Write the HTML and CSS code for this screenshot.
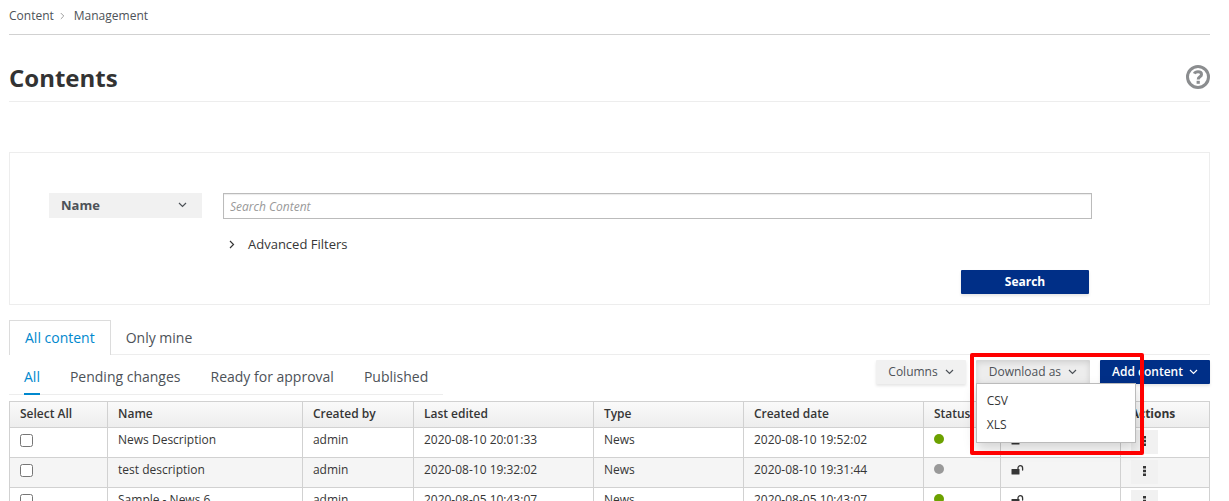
FILE: index.html
```html
<!DOCTYPE html>
<html lang="en">
<head>
<meta charset="utf-8">
<title>Contents</title>
<link rel="stylesheet" href="styles.css">
</head>
<body>
<svg class="defs" aria-hidden="true">
  <symbol id="chev-down" viewBox="0 0 9 6"><path d="M1 1l3.5 3.5L8 1" fill="none" stroke="currentColor" stroke-width="1.2"/></symbol>
  <symbol id="chev-right" viewBox="0 0 6 9"><path d="M1 1l3.5 3.5L1 8" fill="none" stroke="currentColor" stroke-width="1.2"/></symbol>
  <symbol id="unlock" viewBox="0 0 13 10"><rect x="0.500" y="4" width="8" height="5.500" rx=".5" fill="currentColor"/><path d="M7 4.500V3a2.200 2.200 0 0 1 4.600 0V5" fill="none" stroke="currentColor" stroke-width="1.300" stroke-linecap="round"/></symbol>
  <symbol id="kebab" viewBox="0 0 3 10"><path d="M0 0h3v2.500H0zM0 3.700h3v2.500H0zM0 7.400h3v2.500H0z" fill="currentColor"/></symbol>
</svg>
<nav class="breadcrumb" aria-label="Breadcrumb">
  <a href="#">Content</a>
  <svg class="crumb-sep"><use href="#chev-right"/></svg>
  <span>Management</span>
</nav>
<main>
  <header class="page-head">
    <h1>Contents</h1>
    <button class="help" aria-label="Help">
      <svg viewBox="0 0 24 24"><circle cx="12" cy="12" r="10.500" fill="none" stroke="currentColor" stroke-width="3"/><path d="M8.300 8.700C9 7.300 10.300 6.700 12 6.700c2.100 0 3.500 1 3.500 2.700 0 2.500-3.300 2.300-3.300 5" fill="none" stroke="currentColor" stroke-width="3"/><rect x="10.600" y="15.800" width="3.200" height="3" fill="currentColor"/></svg>
    </button>
  </header>

  <form class="search">
    <div class="select-wrap">
      <select class="field-select" aria-label="Search field"><option>Name</option></select>
      <svg class="chev"><use href="#chev-down"/></svg>
    </div>
    <input class="search-input" type="text" placeholder="Search Content" aria-label="Search content">
    <button class="advanced" type="button"><svg class="chev-r"><use href="#chev-right"/></svg>Advanced Filters</button>
    <button class="btn primary submit" type="button">Search</button>
  </form>

  <nav class="tabs" aria-label="Ownership">
    <a class="tab active" href="#">All content</a>
    <a class="tab" href="#">Only mine</a>
  </nav>

  <div class="toolbar">
    <nav class="subtabs" aria-label="Status filter">
      <a class="subtab active" href="#">All</a>
      <a class="subtab" href="#">Pending changes</a>
      <a class="subtab" href="#">Ready for approval</a>
      <a class="subtab" href="#">Published</a>
    </nav>
    <div class="actions">
      <button class="btn">Columns<svg class="chev"><use href="#chev-down"/></svg></button>
      <div class="dropdown">
        <button class="btn open" aria-expanded="true">Download as<svg class="chev"><use href="#chev-down"/></svg></button>
        <ul class="menu">
          <li><a href="#">CSV</a></li>
          <li><a href="#">XLS</a></li>
        </ul>
        <div class="highlight"></div>
      </div>
      <button class="btn primary">Add content<svg class="chev"><use href="#chev-down"/></svg></button>
    </div>
  </div>

  <table class="grid">
    <colgroup><col class="c-select"><col class="c-name"><col class="c-by"><col class="c-date"><col class="c-type"><col class="c-date"><col class="c-status"><col class="c-lock"><col class="c-actions"></colgroup>
    <thead>
      <tr><th>Select All</th><th>Name</th><th>Created by</th><th>Last edited</th><th>Type</th><th>Created date</th><th>Status</th><th aria-label="Lock"></th><th class="strong">Actions</th></tr>
    </thead>
    <tbody>
      <tr><td><input type="checkbox" aria-label="Select News Description"></td><td>News Description</td><td>admin</td><td>2020-08-10 20:01:33</td><td>News</td><td>2020-08-10 19:52:02</td><td><span class="dot green"></span></td><td><svg class="lock"><use href="#unlock"/></svg></td><td><button class="kebab" aria-label="Actions"><svg><use href="#kebab"/></svg></button></td></tr>
      <tr><td><input type="checkbox" aria-label="Select test description"></td><td>test description</td><td>admin</td><td>2020-08-10 19:32:02</td><td>News</td><td>2020-08-10 19:31:44</td><td><span class="dot"></span></td><td><svg class="lock"><use href="#unlock"/></svg></td><td><button class="kebab" aria-label="Actions"><svg><use href="#kebab"/></svg></button></td></tr>
      <tr><td><input type="checkbox" aria-label="Select Sample - News 6"></td><td>Sample - News 6</td><td>admin</td><td>2020-08-05 10:43:07</td><td>News</td><td>2020-08-05 10:43:07</td><td><span class="dot green"></span></td><td><svg class="lock"><use href="#unlock"/></svg></td><td><button class="kebab" aria-label="Actions"><svg><use href="#kebab"/></svg></button></td></tr>
    </tbody>
  </table>
</main>
</body>
</html>
```
FILE: styles.css
```css
* { box-sizing: border-box; }
html { overflow: hidden; }
body {
  margin: 0;
  padding: 0 19px 0 9px;
  background: #fff;
  color: #363636;
  font: 12px/16px "Open Sans", sans-serif;
}
a { color: inherit; text-decoration: none; }
button, input, select { font: inherit; color: inherit; margin: 0; }
button { border: 0; padding: 0; background: none; cursor: pointer; }
svg { display: block; }
.defs { position: absolute; width: 0; height: 0; }

.breadcrumb {
  display: flex;
  align-items: center;
  height: 35px;
  padding-bottom: 3px;
  border-bottom: 1px solid #d1d1d1;
  color: #4d5258;
}
.crumb-sep { width: 5px; height: 8px; margin: 0 9px 0 6px; color: #9c9c9c; }

.page-head {
  display: flex;
  justify-content: space-between;
  align-items: center;
  height: 67px;
  padding-top: 18px;
  border-bottom: 1px solid #ededed;
}
h1 { margin: 0; padding-top: 2px; font-size: 24px; line-height: 32px; font-weight: 700; color: #333; }
.help { color: #8b8d8f; }
.help svg { width: 24px; height: 24px; }

.search {
  display: grid;
  grid-template-columns: 153px 1fr;
  column-gap: 21px;
  margin-top: 50px;
  padding: 40px 117px 10px 39px;
  border: 1px solid #ededed;
}
.select-wrap { position: relative; height: 25px; }
.field-select {
  appearance: none;
  width: 100%;
  height: 25px;
  padding: 0 12px 2px;
  border: 0;
  border-radius: 0;
  background: #f1f1f1;
  color: #4d5258;
  font-size: 13px;
  font-weight: 700;
}
.chev { width: 9px; height: 6px; }
.select-wrap .chev { position: absolute; right: 15px; top: 9px; color: #4d5258; }
.search-input {
  width: 100%;
  height: 26px;
  padding: 0 6px;
  border: 1px solid #bbb;
  border-radius: 0;
  box-shadow: inset 0 1px 1px rgba(0, 0, 0, .08);
}
.search-input::placeholder { color: #999; font-style: italic; opacity: 1; }
.advanced {
  grid-column: 2;
  justify-self: start;
  display: flex;
  align-items: center;
  gap: 13px;
  margin: 16px 0 0 6px;
  font-size: 13px;
  line-height: 18px;
}
.chev-r { width: 6px; height: 9px; }
.btn {
  display: flex;
  align-items: center;
  justify-content: center;
  gap: 7px;
  height: 24px;
  padding: 0 12px;
  border-radius: 1px;
  background: #f1f1f1;
  color: #4d5258;
  box-shadow: 0 2px 3px rgba(0, 0, 0, .1);
  font-weight: 500;
  white-space: nowrap;
}
.btn.primary { gap: 6px; background: #002f87; color: #fff; font-weight: 600; }
.btn.submit { grid-column: 2; justify-self: end; width: 128px; margin: 17px 3px 0 0; font-weight: 700; }

.tabs { display: flex; margin-top: 15px; border-bottom: 1px solid #ededed; font-size: 14px; line-height: 20px; color: #4d5258; }
.tab { padding: 7px 15px 6px; border: 1px solid transparent; border-bottom: 0; }
.tab + .tab { margin-left: -1px; }
.tab.active { margin-bottom: -1px; padding-bottom: 7px; border-color: #dcdcdc; background: #fff; color: #0088ce; }

.toolbar { display: flex; justify-content: space-between; align-items: flex-start; padding-top: 5px; }
.subtabs { display: flex; gap: 30px; margin-top: 7px; padding: 0 15px; border-bottom: 1px solid #ededed; font-size: 14px; line-height: 20px; color: #4d5258; }
.subtab { padding-bottom: 7px; }
.subtab.active { margin-bottom: -1px; padding-bottom: 6px; border-bottom: 2px solid #0088ce; color: #0088ce; }
.actions { display: flex; gap: 10px; }
.dropdown { position: relative; }
.btn.open { padding: 0 13px; background: #ededed; box-shadow: inset 0 2px 6px rgba(0, 0, 0, .14); }
.menu {
  position: absolute;
  z-index: 2;
  top: 23px;
  left: 0;
  width: 160px;
  margin: 0;
  padding: 5px 10px 5px;
  border: 1px solid #bbb;
  background: #fff;
  box-shadow: 0 6px 12px rgba(0, 0, 0, .175);
  list-style: none;
  line-height: 24px;
}
.menu a { display: block; }
.highlight {
  position: absolute;
  z-index: 3;
  top: -7px;
  left: -6px;
  width: 174px;
  height: 102px;
  border: 4px solid #f00;
  border-radius: 2px;
  pointer-events: none;
}

.grid { width: 100%; margin-top: 6px; table-layout: fixed; border-collapse: collapse; }
.c-select { width: 8.17%; }
.c-name { width: 16.24%; }
.c-by { width: 9.25%; }
.c-date { width: 15%; }
.c-type { width: 12.5%; }
.c-status { width: 6.4%; }
.c-lock { width: 10%; }
.grid th, .grid td { border: 1px solid #d1d1d1; padding: 0 10px; text-align: left; vertical-align: top; }
.grid th { height: 26px; padding-top: 4px; font-weight: 600; }
.grid th.strong { font-weight: 700; }
.grid thead tr { background: linear-gradient(#fafafa, #ededed); }
.grid td { height: 30px; padding-top: 4px; }
.grid tbody tr:nth-child(even) { background: #f5f5f5; }
.grid input { display: block; width: 13px; height: 13px; margin-top: 2px; }
.dot { display: block; width: 10px; height: 10px; margin-top: 2px; border-radius: 50%; background: #999; }
.dot.green { background: #6ca100; }
.lock { width: 13px; height: 10px; margin-top: 3px; }
.kebab { display: flex; justify-content: center; align-items: center; width: 27px; height: 24px; margin-top: -2px; padding-bottom: 2px; background: #f1f1f1; }
.kebab svg { width: 3px; height: 10px; }
```
